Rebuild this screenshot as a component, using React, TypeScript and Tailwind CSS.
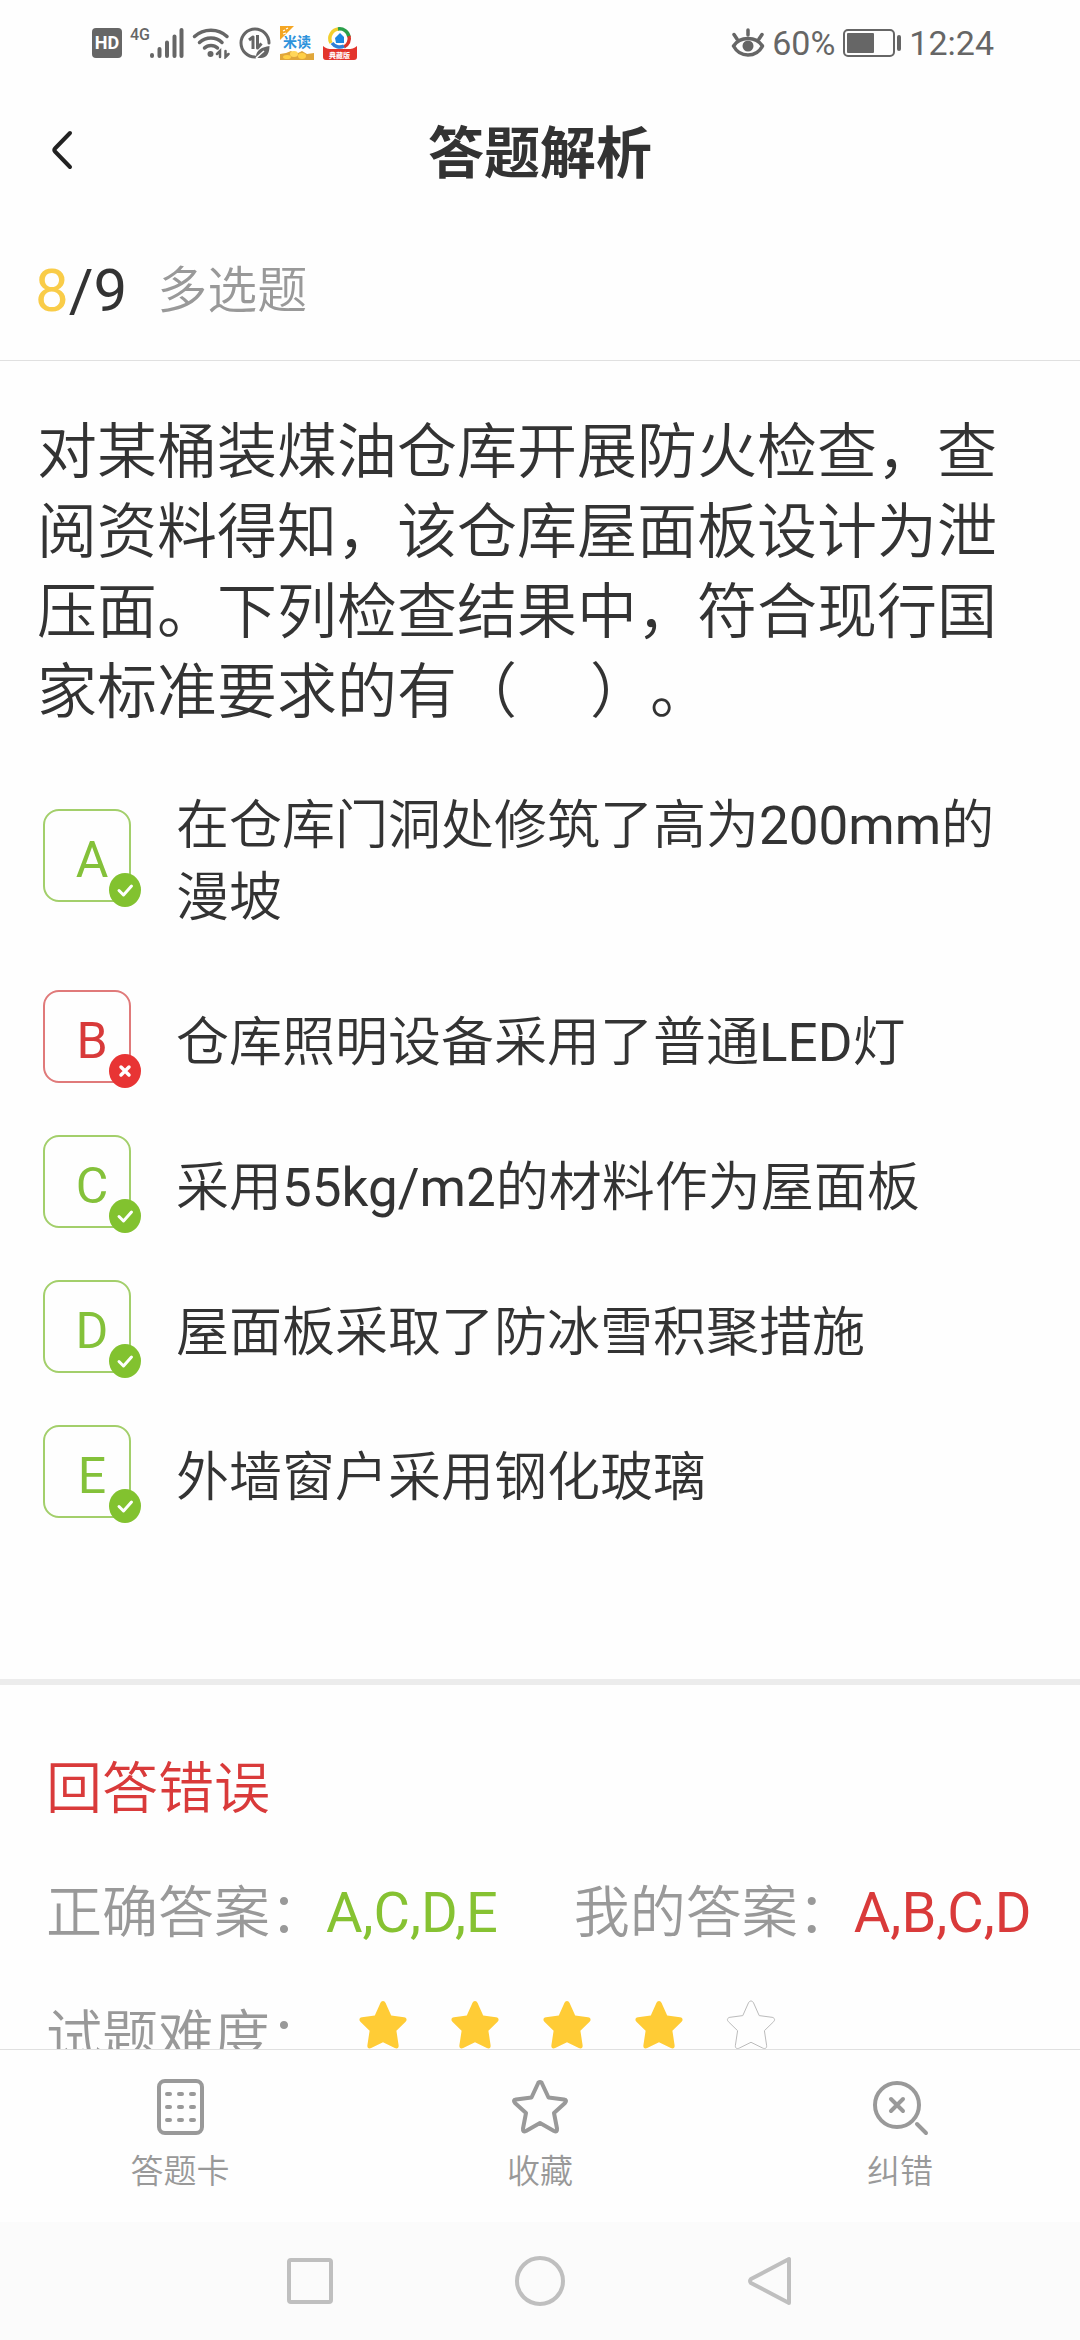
import React from 'react'

type Result = 'right' | 'wrong'

interface Option {
  key: string
  text: string
  result: Result
}

const question =
  '对某桶装煤油仓库开展防火检查，查阅资料得知，该仓库屋面板设计为泄压面。下列检查结果中，符合现行国家标准要求的有（\u00a0\u00a0\u00a0\u00a0\u00a0）。'

const options: Option[] = [
  { key: 'A', text: '在仓库门洞处修筑了高为200mm的漫坡', result: 'right' },
  { key: 'B', text: '仓库照明设备采用了普通LED灯', result: 'wrong' },
  { key: 'C', text: '采用55kg/m2的材料作为屋面板', result: 'right' },
  { key: 'D', text: '屋面板采取了防冰雪积聚措施', result: 'right' },
  { key: 'E', text: '外墙窗户采用钢化玻璃', result: 'right' },
]

const starPath =
  'M25 1c1.200 0 2 .8 2.600 2l5.600 12.600 12.800 1.700c2.600.4 3.400 2.600 1.600 4.400l-9.200 9 2.200 14.600c.4 2.800-1.400 4-3.800 2.800L25 42.300l-11.800 5.800c-2.400 1.200-4.200 0-3.800-2.800l2.200-14.600-9.200-9C.6 19.900 1.400 17.700 4 17.300l12.800-1.700 5.600-12.600c.6-1.200 1.400-2 2.600-2z'

const StatusBar: React.FC = () => (
  <div className="flex h-[86px] shrink-0 items-center justify-between pr-[86px] pl-[92px] text-[#666]">
    <div className="flex items-center gap-2">
      <span className="flex size-[30px] items-center justify-center rounded bg-[#666] text-lg leading-none font-bold text-white">
        HD
      </span>
      <div className="flex items-end">
        <span className="mb-4 text-base leading-none font-medium">4G</span>
        <svg width="34" height="32" viewBox="0 0 34 32" stroke="currentColor" strokeWidth="4" strokeLinecap="round">
          <path d="M2 28v1M9.500 22v7M17 15.500v13.500M24.500 9.500v19.500M31.500 3v26" />
        </svg>
      </div>
      <svg width="38" height="32" viewBox="0 0 38 32" fill="none" stroke="currentColor" strokeWidth="3.500" strokeLinecap="round">
        <path d="M2.500 9.500c9-8.500 24-8.500 32.500 0M7.500 15.500c6.500-6 16.500-6 22.500 0M12.500 21c3.500-3.500 9.500-3.500 13 0" />
        <circle cx="18.500" cy="27" r="3" fill="currentColor" stroke="none" />
        <path d="M28 30v-6l-3 3M33.500 24v6l3-3" strokeWidth="2.500" />
      </svg>
      <svg width="34" height="34" viewBox="0 0 34 34" fill="none" stroke="currentColor" strokeWidth="3">
        <path d="M17 31A14 14 0 1 1 31 17" strokeLinecap="round" />
        <path d="M11 14l4-3v12M19.500 9v13l4-4.500" strokeLinejoin="round" />
        <path d="M18 31c0-7 6-10 13.500-11 0 7-2.500 12.500-9.500 12-1.500 0-3-.5-4-1z" fill="currentColor" stroke="none" />
        <path d="M18 32l8-7" stroke="#fff" strokeWidth="1.500" />
      </svg>
      <svg width="34" height="34" viewBox="0 0 34 34">
        <path d="M0 0h14L0 14z" fill="#f5a623" />
        <path d="M3 5l2-1M6 3l2-1M3 8l3-1" stroke="#fff" strokeWidth="1.200" />
        <text x="3" y="21" fontSize="14" fontWeight="700" fill="#2f93dc">
          米读
        </text>
        <path d="M0 34v-6l6-1 5-2 5 3 6-3 5 3 7-1v7z" fill="#e0a63a" />
        <ellipse cx="14" cy="28" rx="4" ry="3" fill="#ffd659" />
        <ellipse cx="22" cy="30" rx="4" ry="3" fill="#ffcf45" />
        <ellipse cx="7" cy="31" rx="4" ry="2" fill="#ffcf45" />
      </svg>
      <svg width="36" height="34" viewBox="0 0 36 34">
        <g fill="none" strokeWidth="3.500">
          <path d="M9 17A9.500 9.500 0 0 1 17 3" stroke="#f2cf2e" />
          <path d="M16 3a9.500 9.500 0 0 1 11 8" stroke="#2a9f4a" />
          <path d="M27 10a9.500 9.500 0 0 1-5 11" stroke="#d9362b" />
          <path d="M22 20a9.500 9.500 0 0 1-12-3" stroke="#2f7fd6" />
        </g>
        <path d="M13 12l5-5 4 4v6h-8z" fill="#1b86e0" />
        <path d="M1 20c4 4 8 3 17 3s13 1 17-3v11c0 2-1 3-3 3H4c-2 0-3-1-3-3z" fill="#e3342c" />
        <text x="7" y="32" fontSize="7" fontWeight="700" fill="#fff">
          典藏版
        </text>
      </svg>
    </div>
    <div className="flex items-center gap-[7px]">
      <svg width="34" height="32" viewBox="0 0 34 32" fill="none" stroke="currentColor" strokeWidth="3.500" strokeLinecap="round">
        <path d="M2.500 19C9 9 25 9 31.500 19 25 31 9 31 2.500 19z" strokeLinejoin="round" />
        <circle cx="17" cy="19" r="5.500" fill="currentColor" stroke="none" />
        <path d="M17 8V3M6 12L3 7.500M28 12l3-4.500" />
      </svg>
      <span className="text-[34px] leading-none">60%</span>
      <svg width="60" height="28" viewBox="0 0 60 28" fill="none">
        <rect x="2" y="1" width="50" height="26" rx="4" stroke="currentColor" strokeWidth="2" />
        <rect x="5" y="4" width="27" height="20" rx="1" fill="currentColor" />
        <rect x="55" y="6" width="4" height="16" rx="2" fill="currentColor" />
      </svg>
      <span className="text-[34px] leading-none">12:24</span>
    </div>
  </div>
)

const OptionBadge: React.FC<{ option: Option }> = ({ option }) => {
  const right = option.result === 'right'
  return (
    <span className="relative flex size-[98px] shrink-0">
      <span
        className={`h-[93px] w-[88px] rounded-2xl border-2 ${right ? 'border-[#a3cf6b]' : 'border-[#e07a7a]'}`}
      />
      <span
        className={`absolute inset-0 flex items-center justify-center pt-1 text-[50px] leading-none ${
          right ? 'text-[#84c13a]' : 'text-[#d83a3a]'
        }`}
      >
        {option.key}
      </span>
      <svg className="absolute right-0 bottom-0" width="32" height="34" viewBox="0 0 32 34" fill="none">
        <ellipse cx="16" cy="17" rx="16" ry="17" fill={right ? '#82c22f' : '#e83434'} />
        {right ? (
          <path d="M10 17.500l4.500 4.500 8-9" stroke="#fff" strokeWidth="3" strokeLinecap="round" strokeLinejoin="round" />
        ) : (
          <path d="M12 13l8 8M20 13l-8 8" stroke="#fff" strokeWidth="3.500" strokeLinecap="round" />
        )}
      </svg>
    </span>
  )
}

// Latin runs use the regular weight next to the lighter Chinese glyphs
const OptionText: React.FC<{ text: string }> = ({ text }) => (
  <span className="pt-[41px] pb-8 text-[53px] leading-[72px] font-[350]">
    {text.split(/([A-Za-z0-9/]+)/).map((part, i) =>
      i % 2 === 1 ? (
        <span key={i} className="font-normal">
          {part}
        </span>
      ) : (
        part
      ),
    )}
  </span>
)

const Stars: React.FC<{ value: number }> = ({ value }) => (
  <div className="flex gap-[42px] pt-[3px]" role="img" aria-label={`${value}/5`}>
    {[1, 2, 3, 4, 5].map((n) => (
      <svg key={n} width="50" height="50" viewBox="0 0 50 50">
        <path d={starPath} fill={n <= value ? '#ffcc36' : 'none'} stroke={n <= value ? 'none' : '#bbb'} />
      </svg>
    ))}
  </div>
)

const TabButton: React.FC<{ label: string; children: React.ReactNode }> = ({ label, children }) => (
  <button className="flex flex-1 flex-col items-center gap-3 pt-7 text-[33px] leading-[48px] font-[350] text-[#999]">
    <svg width="58" height="58" viewBox="0 0 58 58" fill="none" stroke="#999" strokeWidth="4" strokeLinecap="round" strokeLinejoin="round">
      {children}
    </svg>
    {label}
  </button>
)

const App: React.FC = () => {
  return (
    <div className="flex h-screen flex-col bg-[#fefefe] font-[Roboto,'Noto_Sans_CJK_SC',sans-serif] text-[#333]">
      <StatusBar />
      <header className="grid h-[130px] shrink-0 grid-cols-[1fr_auto_1fr] items-center px-12">
        <button aria-label="返回" className="justify-self-start">
          <svg width="28" height="44" viewBox="0 0 28 44" fill="none" stroke="#222" strokeWidth="4" strokeLinecap="round" strokeLinejoin="round">
            <path d="M22 4L7 19.500q-1.500 1.500 0 3L22 38" />
          </svg>
        </button>
        <h1 className="pt-1.5 text-[56px] leading-none font-bold">答题解析</h1>
      </header>

      <main className="min-h-0 flex-1 overflow-hidden">
        <div className="flex h-[145px] items-center gap-[30px] border-b border-[#e0e0e0] px-[35px] pt-1.5">
          <span className="text-[60px] leading-none">
            <span className="text-[#f9cc48]">8</span>/9
          </span>
          <span className="text-[50px] leading-none font-[350] text-[#999]">多选题</span>
        </div>

        <p className="px-[37px] pt-[52px] text-[60px] leading-[80px] font-[350] [text-spacing-trim:space-all]">{question}</p>

        <ul className="mt-4 mb-[133px] pr-20 pl-[43px]">
          {options.map((option) => (
            <li key={option.key} className="flex items-center gap-[35px]">
              <OptionBadge option={option} />
              <OptionText text={option.text} />
            </li>
          ))}
        </ul>

        <section className="border-t-[6px] border-[#ececec] px-[46px] pt-16 text-[56px] leading-[80px] font-[350] [text-spacing-trim:space-all]">
          <h2 className="text-[#d93a3a]">回答错误</h2>
          <div className="mt-11 flex gap-[76px] whitespace-nowrap">
            <p>
              <span className="text-[#999]">正确答案：</span>
              <span className="font-normal text-[#86c232]">A,C,D,E</span>
            </p>
            <p>
              <span className="text-[#999]">我的答案：</span>
              <span className="font-normal text-[#d93a3a]">A,B,C,D</span>
            </p>
          </div>
          <div className="mt-11 flex gap-8">
            <span className="text-[#999]">试题难度：</span>
            <Stars value={4} />
          </div>
        </section>
      </main>

      <nav className="flex h-[173px] shrink-0 border-t border-[#e0e0e0]">
        <TabButton label="答题卡">
          <rect x="8" y="3" width="43" height="52" rx="6" />
          <path d="M16 16h3M28 16h3M40 16h3M16 29h3M28 29h3M40 29h3M16 42h3M28 42h3M40 42h3" />
        </TabButton>
        <TabButton label="收藏">
          <path d="M29 4q1.500 0 2 1.500l6.500 14 15.500 2q3.500.5 1 3.500L43 35l3 15.500q.5 4-3 2.500L29 45l-14 8q-3.500 1.500-3-2.500L15 35 4 25q-2.500-3 1-3.500l15.500-2 6.500-14Q27.500 4 29 4z" />
        </TabButton>
        <TabButton label="纠错">
          <circle cx="26" cy="27" r="22" />
          <path d="M20 21l12 12M32 21L20 33M46 46l9 9" />
        </TabButton>
      </nav>

      <div className="flex h-[118px] shrink-0 items-center justify-center gap-[178px] bg-[#fbfbfb]">
        {[
          { name: '最近任务', d: 'M7 4h38q2 0 2 2v38q0 2-2 2H7q-2 0-2-2V6q0-2 2-2z' },
          { name: '主页', d: 'M26 2a23 23 0 0 1 0 46a23 23 0 0 1 0-46z' },
          { name: '后退', d: 'M45 3v44L7 27q-2-2 0-4z' },
        ].map((item) => (
          <button key={item.name} aria-label={item.name}>
            <svg width="52" height="50" viewBox="0 0 52 50" fill="none" stroke="#bfbfbf" strokeWidth="4" strokeLinejoin="round">
              <path d={item.d} />
            </svg>
          </button>
        ))}
      </div>
    </div>
  )
}

export default App
